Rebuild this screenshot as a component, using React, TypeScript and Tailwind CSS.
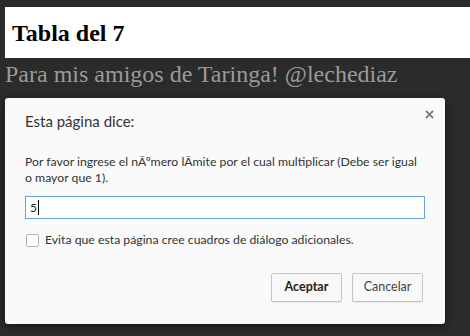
export default function App() {
  return (
    <div className="relative h-[336px] w-[470px] overflow-hidden bg-[#2b2b2b]">
      {/* page behind the dialog */}
      <div className="pt-[7px] pl-[5px]">
        <div className="flex h-[51px] items-center bg-white pl-[7px]">
          <h1 className="font-['Liberation_Serif',serif] text-[24px] font-bold leading-none text-black">
            Tabla del 7
          </h1>
        </div>
        <p className="mt-[2px] font-['Liberation_Serif',serif] text-[24px] leading-[28px] text-[#9a9a9a]">
          Para mis amigos de Taringa! @lechediaz
        </p>
      </div>

      {/* prompt dialog */}
      <div className="absolute left-[5px] top-[98px] h-[226px] w-[440px] rounded-[3px] bg-[#fafafa] shadow-[0_2px_8px_rgba(0,0,0,0.5)] font-['Lato',sans-serif]">
        <button className="absolute right-[11px] top-[12px] text-[#777]">
          <svg width="9" height="9" viewBox="0 0 10 10">
            <path d="M1 1 L9 9 M9 1 L1 9" stroke="currentColor" strokeWidth="2" />
          </svg>
        </button>
        <div className="px-[20px] pt-[13px]">
          <div className="h-[20px] text-[15px] leading-[20px] text-[#333]">Esta página dice:</div>
          <p className="mt-[23px] text-[12.25px] leading-[16px] text-[#333]">
            Por favor ingrese el nÃºmero lÃmite por el cual multiplicar (Debe ser igual
            <br />o mayor que 1).
          </p>
          <div className="mt-[10px] flex h-[23px] w-[400px] items-center border border-[#6a9fd8] bg-white pl-[4px] text-[12px] text-[#222]">
            5<span className="ml-[1px] h-[15px] w-[1px] bg-black" />
          </div>
          <label className="mt-[15px] flex h-[13px] items-center gap-[6px] pl-[1px] text-[12.25px] text-[#333]">
            <span className="h-[13px] w-[13px] rounded-[2px] border border-[#b5b5b5] bg-white" />
            Evita que esta página cree cuadros de diálogo adicionales.
          </label>
          <div className="mt-[26px] flex justify-end gap-[10px] pr-[2px]">
            <button className="h-[29px] w-[71px] rounded-[2px] border border-[#c4c4c4] bg-[#f8f8f8] text-[12.5px] font-bold text-[#222] shadow-[0_1px_1px_rgba(0,0,0,0.08)]">
              Aceptar
            </button>
            <button className="h-[29px] w-[71px] rounded-[2px] border border-[#c4c4c4] bg-[#f8f8f8] text-[12.5px] text-[#444] shadow-[0_1px_1px_rgba(0,0,0,0.08)]">
              Cancelar
            </button>
          </div>
        </div>
      </div>
    </div>
  );
}
